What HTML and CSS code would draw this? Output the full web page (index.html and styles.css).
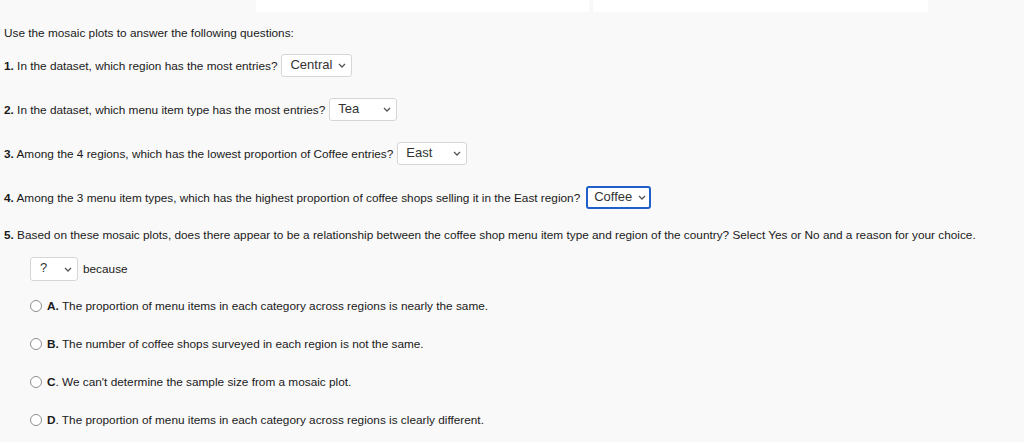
FILE: index.html
```html
<!DOCTYPE html>
<html lang="en">
<head>
    <meta charset="UTF-8">
    <title>Mosaic Plot Questions</title>
    <link rel="stylesheet" href="styles.css">
</head>
<body>
    <div class="topbar">
        <div class="tab tab-left"></div>
        <div class="tab tab-right"></div>
    </div>

    <div class="intro">Use the mosaic plots to answer the following questions:</div>

    <div class="question q1">
        <span><b>1.</b> In the dataset, which region has the most entries?</span>
        <div class="dropdown w-central"><span>Central</span><svg width="8" height="5" viewBox="0 0 8 5"><path d="M1 1l3 3 3-3" fill="none" stroke="#555" stroke-width="1.3"/></svg></div>
    </div>

    <div class="question">
        <span><b>2.</b> In the dataset, which menu item type has the most entries?</span>
        <div class="dropdown w-tea"><span>Tea</span><svg width="8" height="5" viewBox="0 0 8 5"><path d="M1 1l3 3 3-3" fill="none" stroke="#555" stroke-width="1.3"/></svg></div>
    </div>

    <div class="question">
        <span><b>3.</b> Among the 4 regions, which has the lowest proportion of Coffee entries?</span>
        <div class="dropdown w-east"><span>East</span><svg width="8" height="5" viewBox="0 0 8 5"><path d="M1 1l3 3 3-3" fill="none" stroke="#555" stroke-width="1.3"/></svg></div>
    </div>

    <div class="question">
        <span><b>4.</b> Among the 3 menu item types, which has the highest proportion of coffee shops selling it in the East region?</span>
        <div class="dropdown focused w-coffee"><span>Coffee</span><svg width="8" height="5" viewBox="0 0 8 5"><path d="M1 1l3 3 3-3" fill="none" stroke="#555" stroke-width="1.3"/></svg></div>
    </div>

    <div class="q5"><b>5.</b> Based on these mosaic plots, does there appear to be a relationship between the coffee shop menu item type and region of the country? Select Yes or No and a reason for your choice.</div>

    <div class="because-row">
        <div class="dropdown w-q"><span>?</span><svg width="8" height="5" viewBox="0 0 8 5"><path d="M1 1l3 3 3-3" fill="none" stroke="#555" stroke-width="1.3"/></svg></div>
        <span>because</span>
    </div>

    <div class="choices">
        <label class="choice"><span class="radio"></span><span><b>A.</b> The proportion of menu items in each category across regions is nearly the same.</span></label>
        <label class="choice"><span class="radio"></span><span><b>B.</b> The number of coffee shops surveyed in each region is not the same.</span></label>
        <label class="choice"><span class="radio"></span><span><b>C</b>. We can't determine the sample size from a mosaic plot.</span></label>
        <label class="choice"><span class="radio"></span><span><b>D</b>. The proportion of menu items in each category across regions is clearly different.</span></label>
    </div>
</body>
</html>
```

FILE: styles.css
```css
body {
    margin: 0;
    padding: 0 0 0 4px;
    background-color: #f9f9f9;
    color: #1a1a1a;
    font-family: "Liberation Sans", Arial, sans-serif;
    font-size: 11.8px;
    line-height: 14px;
}

.topbar {
    display: flex;
    height: 12px;
    padding-left: 252px;
    gap: 4px;
}

.tab {
    background-color: #fff;
    height: 12px;
}

.tab-left {
    width: 333px;
}

.tab-right {
    width: 335px;
}

.intro {
    margin-top: 14px;
}

.question {
    display: flex;
    align-items: center;
    gap: 4px;
    height: 23px;
    margin-top: 21px;
}

.question.q1 {
    margin-top: 14px;
}

.dropdown {
    display: flex;
    align-items: center;
    justify-content: space-between;
    box-sizing: border-box;
    height: 23px;
    padding: 0 5px 0 8px;
    background-color: #fff;
    border: 1px solid #d6d6d6;
    border-radius: 3px;
    color: #333;
    font-size: 13px;
}

.dropdown span {
    margin-top: -2px;
}

.dropdown.focused {
    border: 2px solid #1f5fc9;
    padding: 0 3px 0 6px;
    margin-left: 2px;
}

.w-central { width: 71px; }
.w-tea { width: 68px; }
.w-east { width: 70px; }
.w-coffee { width: 65px; }
.w-q {
    width: 48px;
    height: 24px;
    padding-left: 9px;
}

.q5 {
    margin-top: 19px;
}

.because-row {
    display: flex;
    align-items: center;
    gap: 5px;
    margin-top: 15px;
    padding-left: 26px;
}

.choices {
    display: flex;
    flex-direction: column;
    gap: 24px;
    margin-top: 18px;
    padding-left: 26px;
}

.choice {
    display: flex;
    align-items: center;
    gap: 5px;
}

.radio {
    box-sizing: border-box;
    width: 12px;
    height: 12px;
    border: 1px solid #8f8f8f;
    border-radius: 50%;
    background-color: #fff;
}
```
